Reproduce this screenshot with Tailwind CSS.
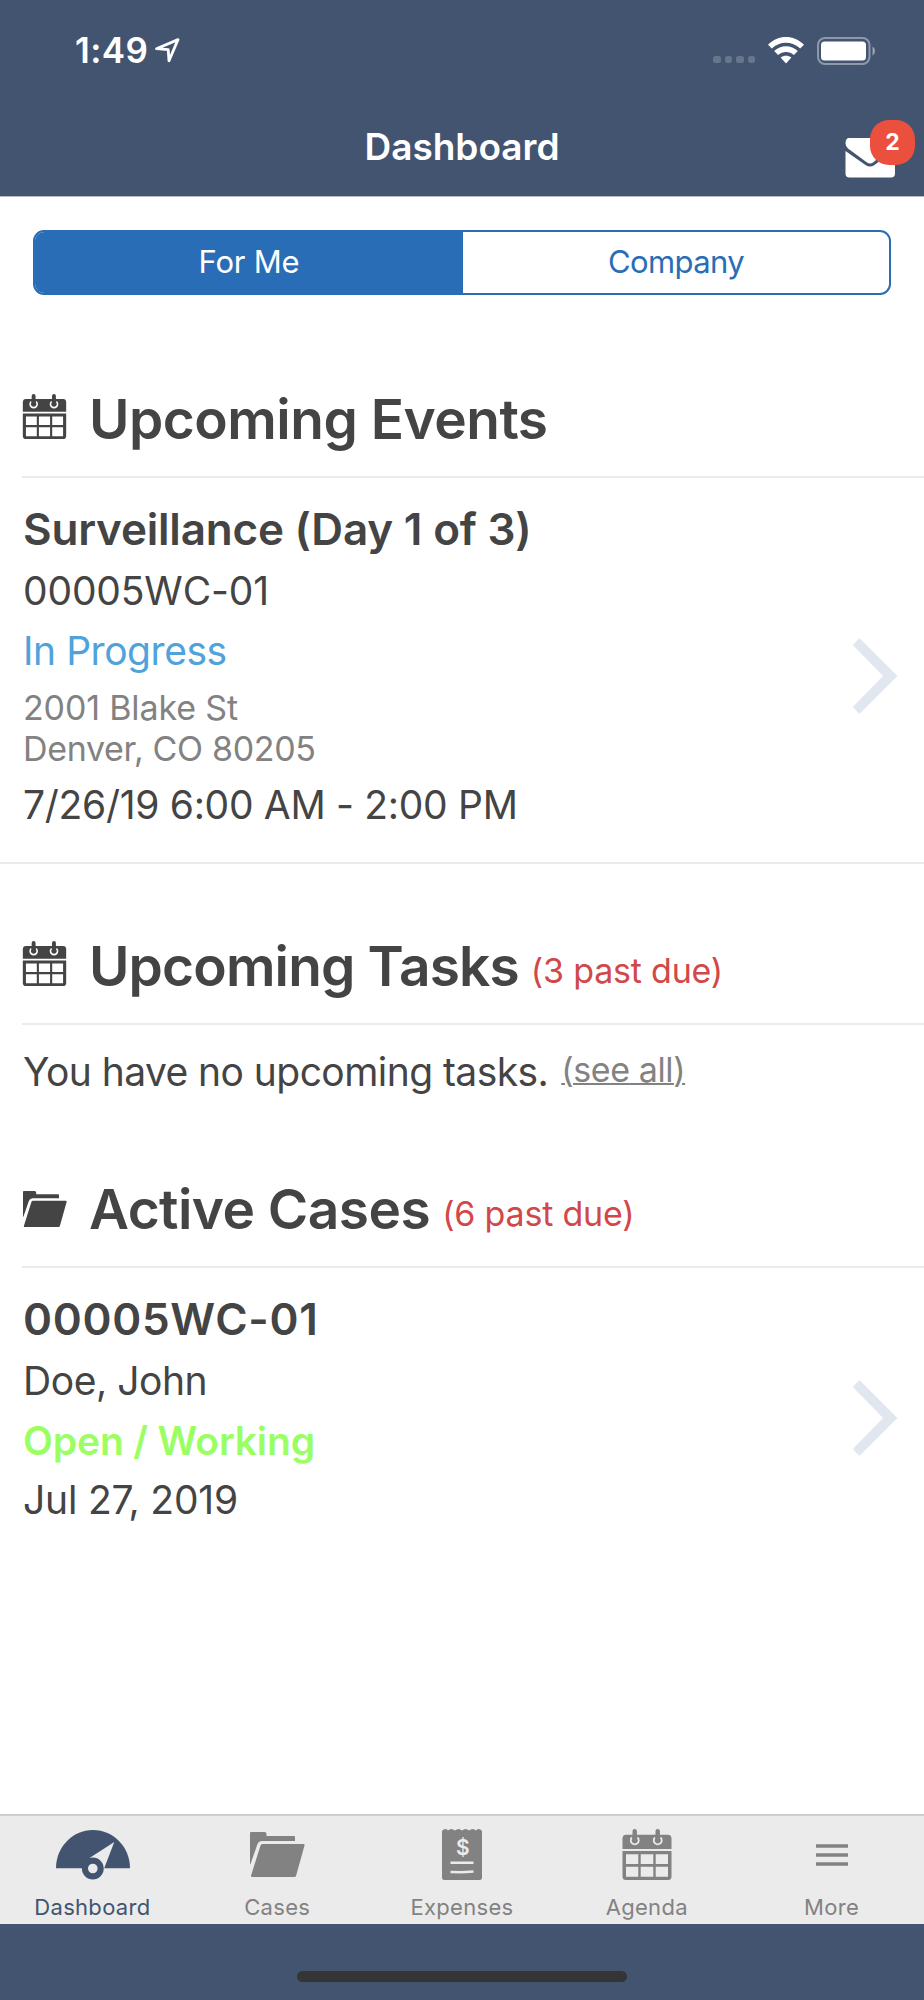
<!DOCTYPE html>
<html lang="en">
<head>
    <meta charset="UTF-8">
    <meta name="viewport" content="width=device-width, initial-scale=1.0">
    <script src="https://cdn.jsdelivr.net/npm/@tailwindcss/browser@4"></script>
    <title>Dashboard</title>
</head>
<body class="bg-white font-['Inter',sans-serif] text-[#444444]">
    <div class="w-[924px] h-[2000px] flex flex-col overflow-hidden whitespace-nowrap">

        <!-- Status bar + title -->
        <header class="h-[197px] shrink-0 bg-[#425470] border-b border-[#b9bbc0] text-white flex flex-col">
            <div class="h-[101px] flex items-center justify-between pl-[75px] pr-[48px]">
                <div class="flex items-center">
                    <span class="text-[35px] font-semibold tracking-[0.4px]">1:49</span>
                    <svg class="w-[25px] h-[25px] ml-[7px]" viewBox="0 0 25 25" fill="none" stroke="currentColor" stroke-width="2.8" stroke-linejoin="round"><path d="M1.5 10.7 23 1.6 14 22.8 13.2 11.6Z"/></svg>
                </div>
                <div class="flex items-center">
                    <div class="flex gap-[4px] pt-[18px] mr-[13px]">
                        <span class="size-[7.500px] rounded-[2.500px] bg-white/20"></span>
                        <span class="size-[7.500px] rounded-[2.500px] bg-white/20"></span>
                        <span class="size-[7.500px] rounded-[2.500px] bg-white/20"></span>
                        <span class="size-[7.500px] rounded-[2.500px] bg-white/20"></span>
                    </div>
                    <svg class="w-[36px] h-[27px] mr-[13px]" viewBox="0 0 36 27" fill="currentColor">
                        <path d="M0 7.800C10-2.600 26-2.600 36 7.800L32.200 11.600C24.200 3.800 11.800 3.800 3.800 11.600Z"/>
                        <path d="M6.200 14.100C12.800 7.700 23.200 7.700 29.800 14.100L25.900 18C21.400 14 14.600 14 10.100 18Z"/>
                        <path d="M12.600 20.600C15.700 18 20.300 18 23.400 20.600L18 26.400Z"/>
                    </svg>
                    <svg class="w-[59px] h-[28px]" viewBox="0 0 59 28" fill="currentColor">
                        <rect x="1" y="1" width="51.500" height="26" rx="7" fill="none" stroke="currentColor" stroke-width="2" opacity=".4"/>
                        <rect x="4" y="4.500" width="45" height="19" rx="3.500"/>
                        <path d="M55.500 9.500c3.300 1.500 3.300 7.500 0 9z" opacity=".45"/>
                    </svg>
                </div>
            </div>
            <div class="h-[91px] grid grid-cols-3 items-center">
                <span></span>
                <h1 class="text-center text-[37px] font-semibold">Dashboard</h1>
                <div class="relative justify-self-end mr-[29px] mt-[22px]">
                    <svg class="w-[50px] h-[40px]" viewBox="0 0 50 40" fill="currentColor">
                        <path d="M4 0H46Q50 0 50 4V6L28 24.500Q25 26.500 22 24.500L3 10.500Q.5 8 .5 5.500Q.5 0 4 0Z"/>
                        <path d="M.5 13 20.500 27Q25 30 29.500 27L50 11V35.500Q50 39.500 46 39.500H4.500Q.5 39.500.5 35.500Z"/>
                    </svg>
                    <span class="absolute left-[25px] top-[-18px] size-[45px] rounded-[19px] bg-[#eb4f3d] flex items-center justify-center text-[23px] font-bold">2</span>
                </div>
            </div>
        </header>

        <main class="flex-1">
            <div class="mt-[33px] mx-[33px] h-[65px] grid grid-cols-[428px_1fr] rounded-[11px] border-2 border-[#286db6] overflow-hidden text-[31px] text-center leading-[60px]">
                <div class="bg-[#286db6] text-white tracking-[-0.2px]">For Me</div>
                <div class="text-[#286db6] tracking-[-0.6px]">Company</div>
            </div>

            <!-- Upcoming events -->
            <section class="mt-[67px]">
                <div class="ml-[22px] h-[116px] border-b-2 border-[#ebebeb] flex items-center">
                    <svg class="w-[45px] h-[46px] mr-[22px] mb-[4px]" viewBox="0 0 50 52" fill="currentColor">
                        <path fill-rule="evenodd" d="M.5 22H49.500V47.500Q49.500 51 46 51H4Q.5 51 .5 47.500V22ZM4 25.300V35H16.300V25.300ZM18.700 25.300V35H31.300V25.300ZM33.700 25.300V35H46V25.300ZM4 37.700V47.700H16.300V37.700ZM18.700 37.700V47.700H31.300V37.700ZM33.700 37.700V47.700H46V37.700Z"/>
                        <path d="M.5 20V9.500Q.5 5.700 4 5.700H46Q49.500 5.700 49.500 9.500V20Z"/>
                        <path d="M10 8.500a4 4 0 1 0 5.500 0M33 8.500a4 4 0 1 0 5.500 0" fill="none" stroke="#fff" stroke-width="1.800"/>
                        <path d="M12.700 2.200V10M35.700 2.200V10" stroke="currentColor" stroke-width="4.400" stroke-linecap="round"/>
                    </svg>
                    <h2 class="text-[55px] font-semibold tracking-[-0.5px]">Upcoming Events</h2>
                </div>
                <div class="pl-[23px] pr-[27px] pt-[20px] pb-[28px] flex items-center justify-between border-b-2 border-[#ebebeb]">
                    <div class="text-[39px]">
                        <h3 class="text-[44px] leading-[62px] font-semibold tracking-[-0.2px]">Surveillance (Day 1 of 3)</h3>
                        <p class="leading-[62px] tracking-[-0.15px]">00005WC-01</p>
                        <p class="leading-[58px] tracking-[-0.45px] text-[#4fa3da]">In Progress</p>
                        <p class="my-[7px] text-[34px] leading-[41px] text-[#828282]"><span class="tracking-[-0.15px]">2001 Blake St</span><br><span class="tracking-[-0.33px]">Denver, CO 80205</span></p>
                        <p class="leading-[58px] tracking-[-0.3px]">7/26/19 6:00 AM - 2:00 PM</p>
                    </div>
                    <svg class="w-[44px] h-[76px] mt-[20px]" viewBox="0 0 44 76" fill="#e0e7ef" stroke="#e0e7ef" stroke-width="2" stroke-linejoin="round"><path d="M6.500 1.500 43 38 6.500 74.500 1.200 69 31.500 38 1.200 7Z"/></svg>
                </div>
            </section>

            <!-- Upcoming tasks -->
            <section class="mt-[45px]">
                <div class="ml-[22px] h-[116px] border-b-2 border-[#ebebeb] flex items-center">
                    <svg class="w-[45px] h-[46px] mr-[22px] mb-[4px]" viewBox="0 0 50 52" fill="currentColor">
                        <path fill-rule="evenodd" d="M.5 22H49.500V47.500Q49.500 51 46 51H4Q.5 51 .5 47.500V22ZM4 25.300V35H16.300V25.300ZM18.700 25.300V35H31.300V25.300ZM33.700 25.300V35H46V25.300ZM4 37.700V47.700H16.300V37.700ZM18.700 37.700V47.700H31.300V37.700ZM33.700 37.700V47.700H46V37.700Z"/>
                        <path d="M.5 20V9.500Q.5 5.700 4 5.700H46Q49.500 5.700 49.500 9.500V20Z"/>
                        <path d="M10 8.500a4 4 0 1 0 5.500 0M33 8.500a4 4 0 1 0 5.500 0" fill="none" stroke="#fff" stroke-width="1.800"/>
                        <path d="M12.700 2.200V10M35.700 2.200V10" stroke="currentColor" stroke-width="4.400" stroke-linecap="round"/>
                    </svg>
                    <h2 class="text-[55px] font-semibold tracking-[-0.85px]">Upcoming Tasks</h2>
                    <span class="ml-[12px] pt-[8px] text-[34px] tracking-[-0.2px] text-[#d24848]">(3 past due)</span>
                </div>
                <div class="pl-[23px] h-[93px] flex items-center">
                    <p class="text-[39px] tracking-[-0.56px] pt-[1px]">You have no upcoming tasks.</p>
                    <a class="ml-[13px] pb-[5px] text-[34px] tracking-[-0.4px] text-[#828282] underline decoration-2">(see all)</a>
                </div>
            </section>

            <!-- Active cases -->
            <section class="mt-[34px]">
                <div class="ml-[22px] h-[116px] border-b-2 border-[#ebebeb] flex items-center">
                    <svg class="w-[44px] h-[37px] ml-[1px] mr-[22px]" viewBox="0 0 55 46" fill="currentColor">
                        <path d="M0 1Q0 0 1 0H14.500Q16.500 0 16.500 2V4H44Q45 4 45 5V9H12Q8.500 9 7.300 12.500L.5 32H0Z"/>
                        <path d="M12.500 12H53.500Q55 12 54.500 13.500L46 44Q45.500 45 44.500 45H2Q.7 45 1.100 43.500L10.500 13.500Q11 12 12.500 12Z"/>
                    </svg>
                    <h2 class="text-[55px] font-semibold tracking-[-0.55px]">Active Cases</h2>
                    <span class="ml-[12px] pt-[8px] text-[34px] tracking-[-0.2px] text-[#d24848]">(6 past due)</span>
                </div>
                <div class="pl-[23px] pr-[27px] pt-[20px] flex items-center justify-between">
                    <div class="text-[39px]">
                        <h3 class="text-[44px] leading-[62px] font-semibold tracking-[0.7px]">00005WC-01</h3>
                        <p class="leading-[62px] tracking-[-0.45px]">Doe, John</p>
                        <p class="leading-[58px] tracking-[-0.15px] font-semibold text-[#9bff64]">Open / Working</p>
                        <p class="leading-[60px] tracking-[-0.2px]">Jul 27, 2019</p>
                    </div>
                    <svg class="w-[44px] h-[76px] mt-[18px]" viewBox="0 0 44 76" fill="#e0e7ef" stroke="#e0e7ef" stroke-width="2" stroke-linejoin="round"><path d="M6.500 1.500 43 38 6.500 74.500 1.200 69 31.500 38 1.200 7Z"/></svg>
                </div>
            </section>
        </main>

        <!-- Tab bar -->
        <nav class="h-[110px] shrink-0 bg-[#ebebeb] border-t-2 border-[#cdcdcd] grid grid-cols-5 text-[22px] tracking-[0.3px] text-[#828282] text-center">
            <div class="text-[#425470]">
                <div class="h-[79px] pb-[2px] pl-[1px] flex items-center justify-center">
                    <svg class="w-[74px] h-[50px]" viewBox="0 0 74 50" fill="currentColor">
                        <path d="M0 38.300C0 17 16.500 0 37 0S74 17 74 38.300Z"/>
                        <path d="M58.300 12 33.500 28 37 38.300H48.200Z" fill="#ebebeb"/>
                        <circle cx="36.800" cy="38.500" r="10.900"/>
                        <circle cx="36.800" cy="38.500" r="4.800" fill="#ebebeb"/>
                    </svg>
                </div>
                <div class="leading-[24px]">Dashboard</div>
            </div>
            <div>
                <div class="h-[79px] pb-[2px] flex items-center justify-center">
                    <svg class="w-[55px] h-[46px]" viewBox="0 0 55 46" fill="currentColor">
                        <path d="M0 1Q0 0 1 0H14.500Q16.500 0 16.500 2V4H44Q45 4 45 5V9H12Q8.500 9 7.300 12.500L.5 32H0Z"/>
                        <path d="M12.500 12H53.500Q55 12 54.500 13.500L46 44Q45.500 45 44.500 45H2Q.7 45 1.100 43.500L10.500 13.500Q11 12 12.500 12Z"/>
                    </svg>
                </div>
                <div class="leading-[24px]">Cases</div>
            </div>
            <div>
                <div class="h-[79px] pb-[2px] flex items-center justify-center">
                    <svg class="w-[40px] h-[51px]" viewBox="0 0 40 51" fill="currentColor">
                        <path d="M0 2Q3-1.500 6 1.500 9-1.500 13 1.500 16.500-1.500 20 1.500 23.500-1.500 27 1.500 31-1.500 34 1.500 37-1.500 40 2V48.500Q40 51 37.500 51H2.500Q0 51 0 48.500Z"/>
                        <path d="M8.500 33.800H31.500M8.500 43L20 43.300 31.500 42.500" fill="none" stroke="#ebebeb" stroke-width="2.600"/>
                        <text x="21" y="25.500" text-anchor="middle" font-size="21" font-weight="600" fill="#ebebeb">$</text>
                    </svg>
                </div>
                <div class="leading-[24px]">Expenses</div>
            </div>
            <div>
                <div class="h-[79px] pb-[2px] flex items-center justify-center">
                    <svg class="w-[50px] h-[52px]" viewBox="0 0 50 52" fill="currentColor">
                        <path fill-rule="evenodd" d="M.5 22H49.500V47.500Q49.500 51 46 51H4Q.5 51 .5 47.500V22ZM4 25.300V35H16.300V25.300ZM18.700 25.300V35H31.300V25.300ZM33.700 25.300V35H46V25.300ZM4 37.700V47.700H16.300V37.700ZM18.700 37.700V47.700H31.300V37.700ZM33.700 37.700V47.700H46V37.700Z"/>
                        <path d="M.5 20V9.500Q.5 5.700 4 5.700H46Q49.500 5.700 49.500 9.500V20Z"/>
                        <path d="M10 8.500a4 4 0 1 0 5.500 0M33 8.500a4 4 0 1 0 5.500 0" fill="none" stroke="#ebebeb" stroke-width="1.800"/>
                        <path d="M12.700 2.200V10M35.700 2.200V10" stroke="currentColor" stroke-width="4.400" stroke-linecap="round"/>
                    </svg>
                </div>
                <div class="leading-[24px]">Agenda</div>
            </div>
            <div>
                <div class="h-[79px] pb-[2px] flex items-center justify-center">
                    <svg class="w-[32px] h-[24px]" viewBox="0 0 32 24" stroke="currentColor" stroke-width="3.600"><path d="M0 3H32M0 12H32M0 21H32"/></svg>
                </div>
                <div class="leading-[24px]">More</div>
            </div>
        </nav>
        <footer class="h-[76px] shrink-0 bg-[#425470] flex justify-center items-end pb-[18px]">
            <div class="w-[330px] h-[11px] rounded-full bg-[#353535]"></div>
        </footer>
    </div>
</body>
</html>
